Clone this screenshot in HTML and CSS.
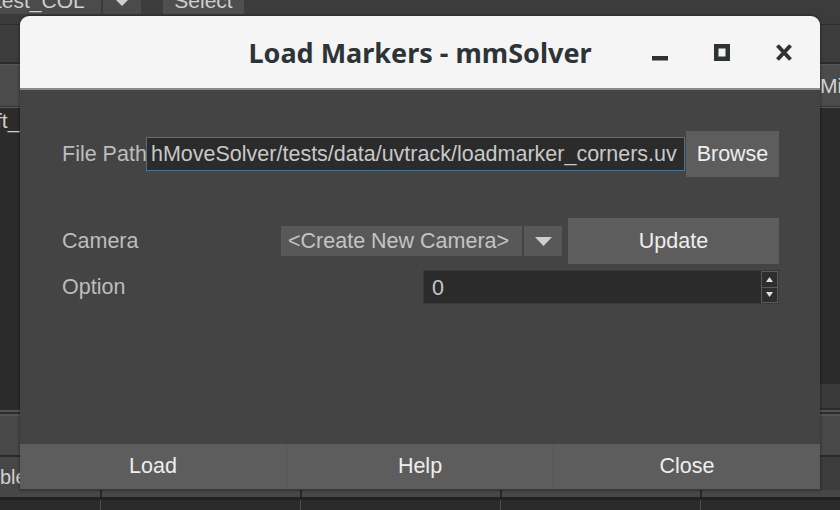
FILE: index.html
```html
<!DOCTYPE html>
<html>
<head>
<meta charset="utf-8">
<link rel="stylesheet" href="styles.css">
</head>
<body>
<div class="app">
  <div class="toolbar">
    <div class="tb-combo"><span>test_COL</span></div>
    <div class="tb-arrow"><svg width="12" height="6" viewBox="0 0 12 6"><polygon points="0,0 12,0 6,6" fill="#cfcfcf"/></svg></div>
    <div class="tb-select"><span>Select</span></div>
  </div>
  <div class="band-a"></div>
  <div class="band-b"></div>
  <div class="band-line"></div>
  <div class="header"><span class="h-left">ft</span><span class="h-right">Min</span></div>
  <div class="header-line"></div>
  <div class="panels">
    <div class="pl"><span class="pl-text">ft_</span></div>
    <div class="pr"><div class="pr-top"></div><div class="pr-bot"></div></div>
  </div>
  <div class="lines"></div>
  <div class="band-c"></div>
  <div class="band-line2"></div>
  <div class="band-d"><div class="bd-left"><span>ble</span></div><div class="bd-right"></div></div>
  <div class="trow trow1"><div></div><div></div><div></div><div></div><div></div></div>
  <div class="tline"></div>
  <div class="trow trow2"><div></div><div></div><div></div><div></div><div></div></div>
</div>

<div class="dialog">
  <div class="titlebar">
    <div class="title">Load Markers - mmSolver</div>
    <div class="controls">
      <svg width="16" height="17" viewBox="0 0 16 17"><rect x="0" y="12" width="16" height="4.5" fill="#2e3436"/></svg>
      <svg width="16" height="17" viewBox="0 0 16 17"><rect x="2.25" y="2.25" width="11.5" height="12.5" fill="none" stroke="#2e3436" stroke-width="4.5"/></svg>
      <svg width="16" height="17" viewBox="0 0 16 17"><path d="M1.5 1.5 L14.5 15.5 M14.5 1.5 L1.5 15.5" stroke="#2e3436" stroke-width="4" fill="none"/></svg>
    </div>
  </div>
  <div class="body">
    <div class="row row-file">
      <div class="label file-label">File Path</div>
      <div class="input"><span>hMoveSolver/tests/data/uvtrack/loadmarker_corners.uv</span></div>
      <div class="btn browse">Browse</div>
    </div>
    <div class="row row-cam">
      <div class="label grow">Camera</div>
      <div class="combo">
        <div class="combo-text">&lt;Create New Camera&gt;</div>
        <div class="combo-arrow"><svg width="17" height="9" viewBox="0 0 17 9"><polygon points="0,0 17,0 8.5,9" fill="#cfcfcf"/></svg></div>
      </div>
      <div class="btn update">Update</div>
    </div>
    <div class="row row-opt">
      <div class="label grow">Option</div>
      <div class="spin">
        <div class="spin-val">0</div>
        <div class="spin-btns">
          <div class="sb"><svg width="7" height="5" viewBox="0 0 7 5"><polygon points="0,5 7,5 3.5,0" fill="#e0e0e0"/></svg></div>
          <div class="sb"><svg width="7" height="5" viewBox="0 0 7 5"><polygon points="0,0 7,0 3.5,5" fill="#e0e0e0"/></svg></div>
        </div>
      </div>
    </div>
  </div>
  <div class="footer">
    <div class="fbtn">Load</div>
    <div class="fbtn">Help</div>
    <div class="fbtn">Close</div>
  </div>
</div>
</body>
</html>
```

FILE: styles.css
```css
* { box-sizing: border-box; margin: 0; padding: 0; }
html, body {
  width: 840px;
  height: 510px;
  overflow: hidden;
  background: #3b3b3b;
  font-family: "Liberation Sans", Arial, sans-serif;
}
body { position: relative; }

.app {
  display: flex;
  flex-direction: column;
  height: 510px;
  color: #cfcfcf;
  font-size: 21px;
}

.toolbar {
  height: 14px;
  display: flex;
  background: #3c3c3c;
  overflow: hidden;
}
.toolbar span {
  display: block;
  margin-top: -10px;
  line-height: 21px;
  white-space: nowrap;
}
.tb-combo { width: 101px; background: #4b4b4b; overflow: hidden; }
.tb-combo span { margin-left: -4px; }
.tb-arrow {
  width: 38px;
  margin-left: 2px;
  background: #4b4b4b;
  display: flex;
  justify-content: center;
  align-items: flex-start;
}
.tb-select {
  width: 81px;
  margin-left: 22px;
  background: #4f4f4f;
  text-align: center;
}

.band-a { height: 11px; background: #3b3b3b; border-bottom: 1px solid #2e2e2e; }
.band-b { height: 37px; background: #3c3c3c; }
.band-line { height: 3px; background: linear-gradient(#2a2a2a 0 2px, #555 2px); }
.header {
  height: 41px;
  background: #4b4b4b;
  display: flex;
  line-height: 41px;
  color: #d2d2d2;
}
.h-left { width: 20px; overflow: hidden; visibility: hidden; }
.h-right { margin-left: auto; width: 20px; overflow: hidden; white-space: nowrap; }
.header-line { height: 2px; background: linear-gradient(#333 0 1px, #5a5a5a 1px); }

.panels { height: 300px; display: flex; }
.pl { flex: 1; background: #2b2b2b; }
.pl-text { display: block; line-height: 24px; margin: 1px 0 0 -4px; }
.pr { flex: 1; display: flex; flex-direction: column; }
.pr-top { height: 276px; background: #2b2b2b; }
.pr-bot { flex: 1; background: #3a3a3a; }

.lines { height: 8px; background: repeating-linear-gradient(#2c2c2c 0 2px, #535353 2px 4px); }
.band-c { height: 39px; background: #484848; }
.band-line2 { height: 2px; background: #2a2a2a; }
.band-d { height: 33px; display: flex; }
.bd-left { flex: 1; background: #474747; }
.bd-left span { display: block; line-height: 24px; margin-top: 8px; font-size: 20px; color: #d0d0d0; }
.bd-right { flex: 1; background: #3c3c3c; }

.trow { display: grid; grid-template-columns: 100px 200px 200px 200px 1fr; }
.trow1 { height: 7px; background: #474747; }
.trow1 > div + div { border-left: 2px solid #262626; }
.tline { height: 3px; background: #222; }
.trow2 { height: 10px; background: #2b2b2b; }
.trow2 > div + div { border-left: 1px solid #4e4e4e; }

/* dialog */
.dialog {
  position: absolute;
  left: 20px;
  top: 16px;
  width: 800px;
  height: 474px;
  display: flex;
  flex-direction: column;
  background: #444444;
  border-radius: 9px 9px 0 0;
  box-shadow: 0 0 3px rgba(0, 0, 0, 0.6);
}
.titlebar {
  height: 74px;
  background: #f5f5f5;
  border-bottom: 2px solid #8b8b89;
  border-radius: 9px 9px 0 0;
  display: grid;
  grid-template-columns: 1fr auto 1fr;
  align-items: center;
}
.title {
  grid-column: 2;
  font-family: "Noto Sans", sans-serif;
  font-weight: 700;
  font-size: 27px;
  color: #2e3436;
  white-space: nowrap;
}
.controls {
  grid-column: 3;
  justify-self: end;
  display: flex;
  align-items: center;
  gap: 46px;
  padding-right: 28px;
}
.controls svg { display: block; }

.body {
  height: 354px;
  padding: 41px 41px 0 42px;
}
.row { display: flex; align-items: center; }
.label { color: #bdbdbd; font-size: 21.5px; white-space: nowrap; }
.grow { flex: 1; }
.row-file { height: 46px; }
.file-label { width: 84px; }
.input {
  width: 539px;
  height: 34px;
  background: #2b2b2b;
  border: 1px solid #4a7290;
  color: #c8c8c8;
  font-size: 21.5px;
  line-height: 32px;
  padding-left: 4px;
  overflow: hidden;
  white-space: nowrap;
}
.btn {
  background: #5d5d5d;
  color: #eeeeee;
  font-size: 21.5px;
  display: flex;
  align-items: center;
  justify-content: center;
  height: 46px;
}
.browse { width: 93px; margin-left: 1px; }

.row-cam { height: 46px; margin-top: 41px; }
.combo { width: 281px; height: 30px; display: flex; }
.combo-text {
  width: 241px;
  background: #585858;
  color: #c4c4c4;
  font-size: 21.5px;
  line-height: 30px;
  padding-left: 7px;
  white-space: nowrap;
  overflow: hidden;
}
.combo-arrow {
  width: 38px;
  margin-left: 2px;
  background: #585858;
  display: flex;
  align-items: center;
  justify-content: center;
}
.update { width: 211px; margin-left: 6px; }

.row-opt { height: 34px; margin-top: 6px; }
.spin {
  width: 356px;
  height: 34px;
  display: flex;
  background: #2b2b2b;
  border: 1px solid #393939;
}
.spin-val {
  flex: 1;
  color: #c8c8c8;
  font-size: 21.5px;
  line-height: 34px;
  padding-left: 8px;
}
.spin-btns { width: 17px; display: flex; flex-direction: column; }
.sb {
  flex: 1;
  background: #2e2e2e;
  border: 1px solid #5a5a5a;
  display: flex;
  align-items: center;
  justify-content: center;
}
.sb + .sb { border-top: none; }

.footer {
  height: 46px;
  display: flex;
  border-bottom: 1px solid #383838;
}
.fbtn {
  flex: 1;
  background: #5d5d5d;
  color: #eeeeee;
  font-size: 21.5px;
  display: flex;
  align-items: center;
  justify-content: center;
}
.fbtn + .fbtn { border-left: 1px solid #565656; }
```
